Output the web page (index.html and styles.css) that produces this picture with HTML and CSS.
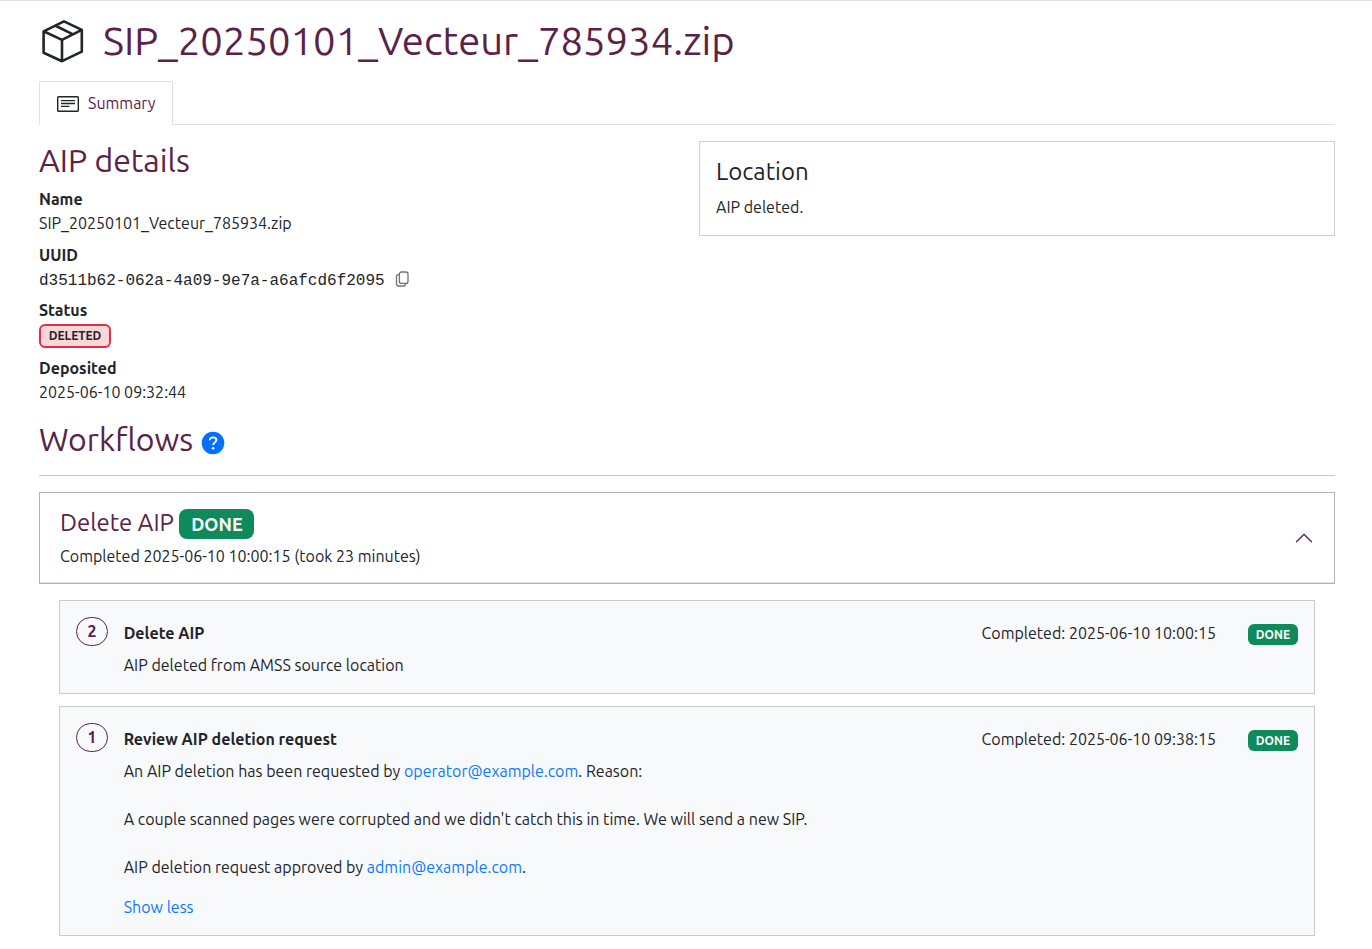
FILE: index.html
```html
<!DOCTYPE html>
<html lang="en">
<head>
<meta charset="utf-8">
<title>SIP_20250101_Vecteur_785934.zip</title>
<link rel="stylesheet" href="styles.css">
</head>
<body>
<main class="page">
  <header class="title-row">
    <svg class="title-icon" width="48" height="48" viewBox="0 0 48 48" fill="none" stroke="#212529" stroke-width="2.6" stroke-linejoin="round"><path d="M25 4.300 42.800 12.900V34.700L23 44.200 4.600 35.800V14.300Z"/><path d="M4.600 14.300 23 22.900 42.800 12.900M23 22.900V44.200M16 8.500 34 17.400"/></svg>
    <h1 class="title">SIP_20250101_Vecteur_785934.zip</h1>
  </header>
  <nav class="tabs">
    <a class="tab"><svg class="tab-icon" width="22" height="16" viewBox="0 0 22 16" fill="none" stroke="#212529" stroke-width="1.4"><rect x=".7" y=".7" width="20.6" height="14.6" rx=".8"/><path d="M4 4.6H18M4 7.5H18M4 10.4H12.500"/></svg><span class="tab-label">Summary</span></a>
  </nav>
  <div class="columns">
    <section class="details">
      <h2 class="section-title details-title">AIP details</h2>
      <dl class="facts">
        <dt>Name</dt><dd>SIP_20250101_Vecteur_785934.zip</dd>
        <dt>UUID</dt><dd class="uuid"><span>d3511b62-062a-4a09-9e7a-a6afcd6f2095</span><svg width="14" height="16" viewBox="0 0 14 16" fill="none" stroke="#6c757d" stroke-width="1.3"><rect x="4.400" y="1" width="8.600" height="11.400" rx="2"/><path d="M4.400 3.500H3.500A2 2 0 0 0 1.500 5.500V13A2 2 0 0 0 3.500 15H8.600A1.900 1.900 0 0 0 10.500 13.100V12.500"/></svg></dd>
        <dt>Status</dt><dd class="status"><span class="badge-deleted">DELETED</span></dd>
        <dt>Deposited</dt><dd>2025-06-10 09:32:44</dd>
      </dl>
    </section>
    <section class="location">
      <h3 class="location-title">Location</h3>
      <p class="location-text">AIP deleted.</p>
    </section>
  </div>
  <div class="workflow-head">
    <h2 class="section-title workflow-title">Workflows</h2>
    <svg class="help" width="24" height="24" viewBox="0 0 24 24"><circle cx="12" cy="12" r="11.300" fill="#0070ff"/><path d="M8.800 9.300C8.900 7.500 10.200 6.400 12.100 6.400S15.400 7.500 15.400 9.100C15.400 11.200 12.200 11.600 12.200 14" fill="none" stroke="#fff" stroke-width="1.900"/><circle cx="12.100" cy="17.300" r="1.300" fill="#fff"/></svg>
  </div>
  <section class="workflow">
    <div>
      <div class="workflow-line"><h3 class="workflow-name">Delete AIP</h3><span class="badge badge-large">DONE</span></div>
      <p class="workflow-text">Completed 2025-06-10 10:00:15 (took 23 minutes)</p>
    </div>
    <svg width="20" height="20" viewBox="0 0 16 16" fill="none" stroke="#5b2249" stroke-linecap="round" stroke-linejoin="round"><path d="M2 11 8 5 14 11"/></svg>
  </section>
  <div class="steps">
    <article class="step">
      <span class="num">2</span>
      <div class="step-body">
        <div class="step-head"><strong class="step-name">Delete AIP</strong><span class="completed">Completed: 2025-06-10 10:00:15</span><span class="badge badge-small">DONE</span></div>
        <p class="line">AIP deleted from AMSS source location</p>
      </div>
    </article>
    <article class="step">
      <span class="num">1</span>
      <div class="step-body">
        <div class="step-head"><strong class="step-name">Review AIP deletion request</strong><span class="completed">Completed: 2025-06-10 09:38:15</span><span class="badge badge-small">DONE</span></div>
        <p class="line">An AIP deletion has been requested by <a>operator@example.com</a>. Reason:</p>
        <p class="line para">A couple scanned pages were corrupted and we didn't catch this in time. We will send a new SIP.</p>
        <p class="line para">AIP deletion request approved by <a>admin@example.com</a>.</p>
        <p class="line toggle"><a>Show less</a></p>
      </div>
    </article>
  </div>
</main>
</body>
</html>
```

FILE: styles.css
```css
* { box-sizing: border-box; }
body { margin: 0; background: #fff; color: #212529; font: 16px/24px Ubuntu, "Open Sans", "Noto Sans", sans-serif; white-space: nowrap; }
h1, h2, h3, p, dl, dd { margin: 0; font-weight: 400; }
.page { height: 949px; overflow: hidden; border-top: 1px solid #dee2e6; padding: 16px 37px 0 39px; }
.title-row { display: flex; align-items: center; height: 48px; gap: 16px; }
.title { color: #5b2249; font-size: 40px; line-height: 48px; }
.tabs { display: flex; height: 44px; margin-top: 16px; border-bottom: 1px solid #dee2e6; }
.tab { display: flex; align-items: center; width: 134px; height: 44px; padding-left: 17px; gap: 9px; background: #fff; border: 1px solid #dee2e6; border-bottom: 0; color: #5b2249; }
.tab-label { padding-bottom: 2px; }
.columns { display: grid; grid-template-columns: 1fr 636px; gap: 24px; height: 271px; margin-top: 16px; align-items: start; }
.section-title { color: #5b2249; font-size: 32px; line-height: 38.4px; }
.facts { margin-top: 8px; }
dt { font-weight: 700; }
dd { margin-bottom: 8px; height: 24px; }
.uuid { display: flex; align-items: center; height: 23px; gap: 10px; font: 16px/24px "Liberation Mono", monospace; }
.uuid span { padding-top: 4px; }
.status { display: flex; align-items: flex-end; height: 26px; }
.badge-deleted { width: 72px; height: 24px; border: 2px solid #e02d48; border-radius: 6px; background: #f8d7da; text-align: center; font-size: 12px; font-weight: 700; line-height: 20px; }
.location { height: 95px; padding: 15px 16px; border: 1px solid #ced0d2; }
.location-title { font-size: 24px; line-height: 29px; }
.location-text { margin-top: 9px; }
.workflow-head { display: flex; align-items: center; gap: 8px; height: 64px; padding: 8px 0 17px; border-bottom: 1px solid #c8c9ca; }
.help { margin-top: 7px; }
.workflow { display: flex; justify-content: space-between; align-items: center; height: 92px; margin-top: 16px; padding: 0 20px; border: 1px solid #adb5bd; box-shadow: inset 0 -1px #dee2e6; }
.workflow-line { display: flex; align-items: center; gap: 5px; height: 32px; margin-bottom: 4px; }
.workflow-text { margin-bottom: 1px; }
.workflow-name { color: #5b2249; font-size: 24px; line-height: 29px; margin-bottom: 3px; }
.badge { border-radius: 6px; background: #0f8a5a; color: #fff; text-align: center; font-weight: 700; }
.badge-small { width: 50px; height: 21px; margin-top: 2px; font-size: 12px; line-height: 21px; }
.badge-large { width: 75px; height: 30px; padding-left: 1px; border-radius: 8px; font-size: 18px; line-height: 30px; }
.steps { display: grid; gap: 12px; margin-top: 16px; padding: 0 20px; }
.step { display: flex; gap: 15.7px; padding: 16px; border: 1px solid #c8cacc; background: #f8f9fb; }
.num { width: 32px; height: 29px; border: 1px solid #5b2249; border-radius: 15px; color: #5b2249; text-align: center; font-weight: 700; line-height: 27px; }
.step-body { flex: 1; }
.step-head { display: flex; align-items: center; height: 32px; margin-bottom: 4px; }
.completed { margin-left: auto; margin-right: 32px; }
.para { margin-top: 24px; }
.toggle { margin-top: 16px; }
.line a { color: #0d78fd; }
```
